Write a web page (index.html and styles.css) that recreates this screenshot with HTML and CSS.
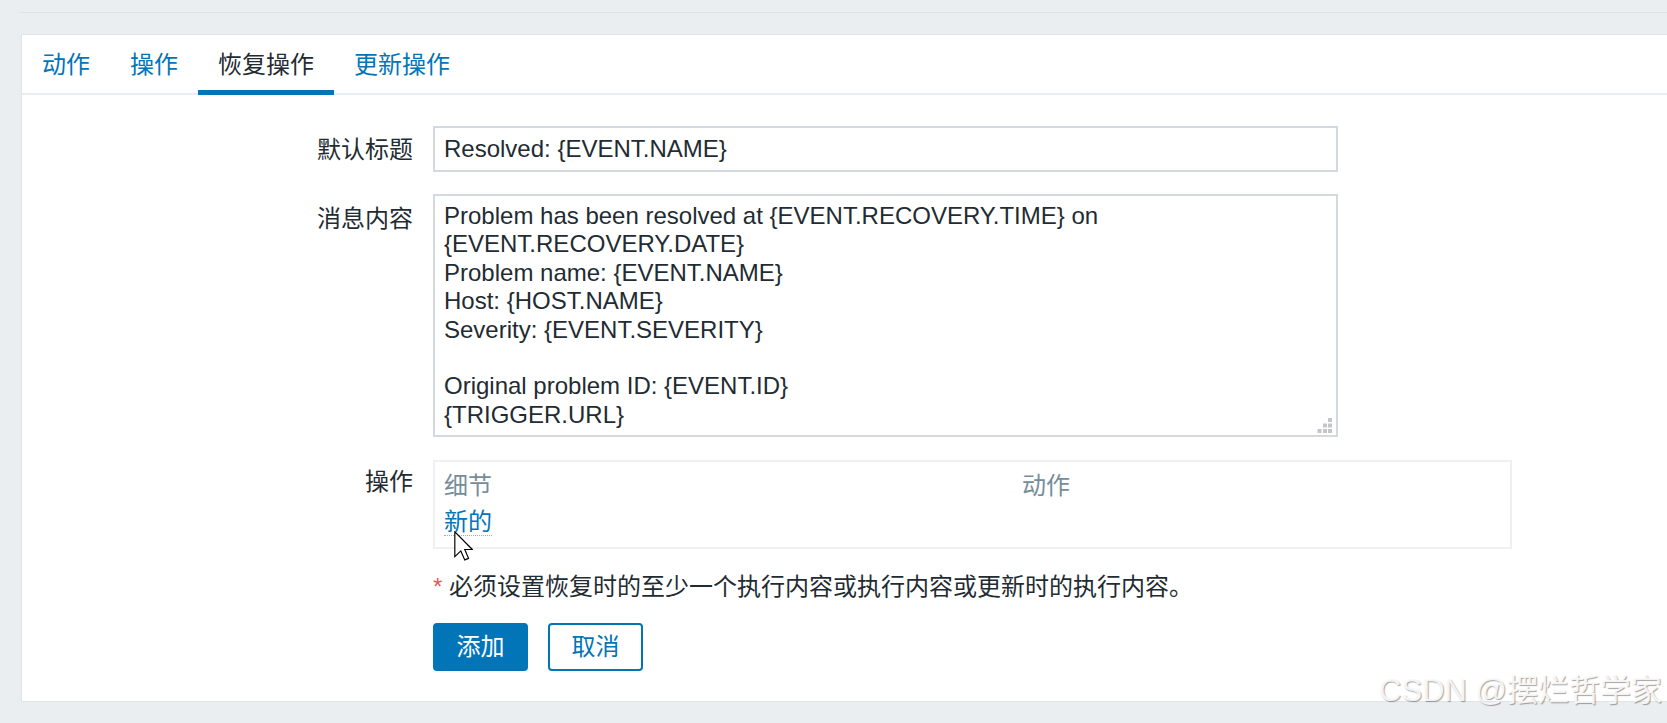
FILE: index.html
```html
<!DOCTYPE html>
<html lang="zh-CN">
<head>
<meta charset="utf-8">
<title>恢复操作</title>
<link rel="stylesheet" href="styles.css">
</head>
<body>
<div class="topbar"></div>
<div class="panel">
  <ul class="tabs">
    <li class="tab">动作</li>
    <li class="tab">操作</li>
    <li class="tab active">恢复操作</li>
    <li class="tab">更新操作</li>
  </ul>
  <form class="form">
    <div class="row row-title">
      <label class="label">默认标题</label>
      <div class="field"><input class="input" type="text" value="Resolved: {EVENT.NAME}"></div>
    </div>
    <div class="row row-message">
      <label class="label label-message">消息内容</label>
      <div class="field textarea-wrap">
<textarea class="textarea">Problem has been resolved at {EVENT.RECOVERY.TIME} on {EVENT.RECOVERY.DATE}
Problem name: {EVENT.NAME}
Host: {HOST.NAME}
Severity: {EVENT.SEVERITY}

Original problem ID: {EVENT.ID}
{TRIGGER.URL}</textarea>
        <svg class="grip" width="16" height="16" viewBox="0 0 16 16">
          <rect x="11" y="0" width="4" height="4" fill="#c4c6c8"/>
          <rect x="6" y="5.5" width="4" height="4" fill="#c4c6c8"/>
          <rect x="11" y="5.5" width="4" height="4" fill="#c4c6c8"/>
          <rect x="0.5" y="11" width="4" height="4" fill="#c4c6c8"/>
          <rect x="6" y="11" width="4" height="4" fill="#c4c6c8"/>
          <rect x="11" y="11" width="4" height="4" fill="#c4c6c8"/>
        </svg>
      </div>
    </div>
    <div class="row row-ops">
      <label class="label label-ops">操作</label>
      <div class="field">
        <div class="ops-box">
          <div class="ops-head"><span>细节</span><span>动作</span></div>
          <div class="ops-body">
            <a class="link">新的</a>
            <svg class="cursor" width="19" height="30" viewBox="0 0 12 19">
              <path d="M0.5 0.5 L0.5 16.2 L4.3 12.6 L6.8 18.3 L9.2 17.3 L6.8 11.7 L11.6 11.7 Z" fill="#ffffff" stroke="#000000" stroke-width="0.75" stroke-linejoin="miter"/>
            </svg>
          </div>
        </div>
      </div>
    </div>
    <div class="row row-hint">
      <div class="label"></div>
      <div class="field hint"><span class="req">*</span> 必须设置恢复时的至少一个执行内容或执行内容或更新时的执行内容。</div>
    </div>
    <div class="row row-buttons">
      <div class="label"></div>
      <div class="field buttons">
        <button type="button" class="btn btn-primary">添加</button>
        <button type="button" class="btn btn-secondary">取消</button>
      </div>
    </div>
  </form>
</div>
<div class="watermark">CSDN @摆烂哲学家</div>
</body>
</html>
```

FILE: styles.css
```css
html, body {
  margin: 0;
  padding: 0;
}

body {
  background: #ebeef0;
  font-family: "Liberation Sans", "Noto Sans CJK SC", sans-serif;
  font-size: 24px;
  line-height: 28.4px;
  color: #1f2c33;
  height: 723px;
  overflow: hidden;
  position: relative;
}

.topbar {
  height: 12px;
  margin-left: 20px;
  border-bottom: 1px solid #dde2e5;
}

.panel {
  margin: 21px 0 0 21px;
  background: #ffffff;
  border: 1px solid #dfe4e7;
  border-right: none;
}

.tabs {
  display: flex;
  list-style: none;
  margin: 0;
  padding: 0;
  border-bottom: 2px solid #ebeef0;
}

.tab {
  box-sizing: border-box;
  height: 60px;
  margin-bottom: -2px;
  padding: 16px 20px 0;
  border-bottom: 5px solid transparent;
  color: #0275b8;
  white-space: nowrap;
}

.tab.active {
  color: #1f2c33;
  border-bottom-color: #0275b8;
}

.form {
  display: flex;
  flex-direction: column;
  padding: 31px 0 30px;
}

.row {
  display: flex;
  align-items: flex-start;
}

.label {
  box-sizing: border-box;
  width: 391px;
  flex: none;
  margin-right: 20px;
  text-align: right;
  padding-top: 10px;
  white-space: nowrap;
}

.label-message {
  padding-top: 11px;
}

.label-ops {
  padding-top: 8px;
}

.field {
  flex: none;
}

.row-message {
  margin-top: 22px;
}

.row-ops {
  margin-top: 23px;
}

.row-hint {
  margin-top: 24px;
}

.row-hint .label,
.row-buttons .label {
  padding-top: 0;
}

.row-buttons {
  margin-top: 21px;
}

.input {
  display: block;
  box-sizing: border-box;
  width: 905px;
  height: 46px;
  margin: 0;
  padding: 0 9px;
  border: 2px solid #d3dadf;
  background: #ffffff;
  font: inherit;
  color: #1f2c33;
  outline: none;
}

.textarea-wrap {
  position: relative;
}

.textarea {
  display: block;
  box-sizing: border-box;
  width: 905px;
  height: 243px;
  margin: 0;
  padding: 6px 9px;
  border: 2px solid #d3dadf;
  background: #ffffff;
  font: inherit;
  line-height: 28.4px;
  color: #1f2c33;
  resize: none;
  overflow: hidden;
  outline: none;
}

.grip {
  position: absolute;
  right: 5px;
  bottom: 3px;
  display: block;
}

.ops-box {
  box-sizing: border-box;
  width: 1079px;
  border: 2px solid #eef0f2;
  padding: 10px 9px 11px;
}

.ops-head {
  display: grid;
  grid-template-columns: 578px 1fr;
  color: #768d99;
  padding-bottom: 7.6px;
}

.ops-body {
  position: relative;
  height: 28.4px;
}

.link {
  color: #0275b8;
  border-bottom: 1px dotted #7fb6d8;
  cursor: pointer;
}

.cursor {
  position: absolute;
  left: 10px;
  top: 23px;
  display: block;
}

.hint {
  white-space: nowrap;
}

.req {
  color: #e45959;
}

.buttons {
  display: flex;
  gap: 20px;
}

.btn {
  box-sizing: border-box;
  height: 48px;
  margin: 0;
  padding: 0 21.5px;
  border: 2px solid #0275b8;
  border-radius: 4px;
  font: inherit;
  line-height: 28.4px;
  cursor: pointer;
}

.btn-primary {
  background: #0275b8;
  color: #ffffff;
}

.btn-secondary {
  background: #ffffff;
  color: #0275b8;
}

.watermark {
  position: absolute;
  right: 5px;
  top: 672px;
  font-size: 31px;
  line-height: 37px;
  color: rgba(250, 250, 250, 0.92);
  text-shadow: 1px 1px 1px rgba(0, 0, 0, 0.35);
  white-space: nowrap;
}
```
